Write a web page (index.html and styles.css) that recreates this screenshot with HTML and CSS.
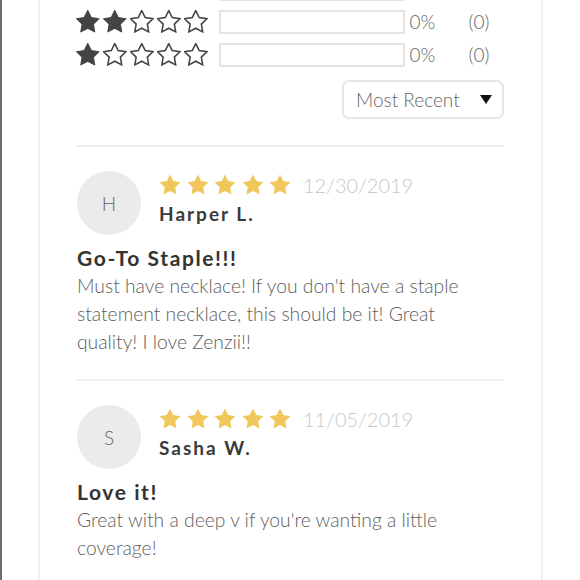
FILE: index.html
```html
<!DOCTYPE html>
<html>
<head>
<meta charset="utf-8">
<link rel="stylesheet" href="styles.css">
</head>
<body>
<svg width="0" height="0" class="defs">
  <defs>
    <polygon id="star" points="12,2 15.09,8.26 22,9.27 17,14.14 18.18,21.02 12,17.77 5.82,21.02 7,14.14 2,9.27 8.91,8.26"/>
  </defs>
</svg>
<div class="page">
  <div class="card">
    <div class="ratings">
      <div class="rating-row">
        <div class="stars dark">
          <svg viewBox="1.5 1.5 21 21"><use href="#star" class="full"/></svg>
          <svg viewBox="1.5 1.5 21 21"><use href="#star" class="full"/></svg>
          <svg viewBox="1.5 1.5 21 21"><use href="#star" class="full"/></svg>
          <svg viewBox="1.5 1.5 21 21"><use href="#star" class="empty"/></svg>
          <svg viewBox="1.5 1.5 21 21"><use href="#star" class="empty"/></svg>
        </div>
        <div class="bar"></div>
      </div>
      <div class="rating-row">
        <div class="stars dark">
          <svg viewBox="1.5 1.5 21 21"><use href="#star" class="full"/></svg>
          <svg viewBox="1.5 1.5 21 21"><use href="#star" class="full"/></svg>
          <svg viewBox="1.5 1.5 21 21"><use href="#star" class="empty"/></svg>
          <svg viewBox="1.5 1.5 21 21"><use href="#star" class="empty"/></svg>
          <svg viewBox="1.5 1.5 21 21"><use href="#star" class="empty"/></svg>
        </div>
        <div class="bar"></div>
        <span class="pct">0%</span>
        <span class="count">(0)</span>
      </div>
      <div class="rating-row">
        <div class="stars dark">
          <svg viewBox="1.5 1.5 21 21"><use href="#star" class="full"/></svg>
          <svg viewBox="1.5 1.5 21 21"><use href="#star" class="empty"/></svg>
          <svg viewBox="1.5 1.5 21 21"><use href="#star" class="empty"/></svg>
          <svg viewBox="1.5 1.5 21 21"><use href="#star" class="empty"/></svg>
          <svg viewBox="1.5 1.5 21 21"><use href="#star" class="empty"/></svg>
        </div>
        <div class="bar"></div>
        <span class="pct">0%</span>
        <span class="count">(0)</span>
      </div>
    </div>

    <div class="sort-wrap">
      <div class="sort">
        <span>Most Recent</span>
        <span class="caret"></span>
      </div>
    </div>

    <div class="review">
      <div class="review-head">
        <div class="avatar">H</div>
        <div class="meta">
          <div class="meta-top">
            <div class="stars gold">
              <svg viewBox="1.5 1.5 21 21"><use href="#star"/></svg>
              <svg viewBox="1.5 1.5 21 21"><use href="#star"/></svg>
              <svg viewBox="1.5 1.5 21 21"><use href="#star"/></svg>
              <svg viewBox="1.5 1.5 21 21"><use href="#star"/></svg>
              <svg viewBox="1.5 1.5 21 21"><use href="#star"/></svg>
            </div>
            <span class="date">12/30/2019</span>
          </div>
          <div class="name">Harper L.</div>
        </div>
      </div>
      <h3 class="title">Go-To Staple!!!</h3>
      <p class="body">Must have necklace! If you don't have a staple statement necklace, this should be it! Great quality! I love Zenzii!!</p>
    </div>

    <div class="review">
      <div class="review-head">
        <div class="avatar">S</div>
        <div class="meta">
          <div class="meta-top">
            <div class="stars gold">
              <svg viewBox="1.5 1.5 21 21"><use href="#star"/></svg>
              <svg viewBox="1.5 1.5 21 21"><use href="#star"/></svg>
              <svg viewBox="1.5 1.5 21 21"><use href="#star"/></svg>
              <svg viewBox="1.5 1.5 21 21"><use href="#star"/></svg>
              <svg viewBox="1.5 1.5 21 21"><use href="#star"/></svg>
            </div>
            <span class="date">11/05/2019</span>
          </div>
          <div class="name">Sasha W.</div>
        </div>
      </div>
      <h3 class="title">Love it!</h3>
      <p class="body">Great with a deep v if you're wanting a little coverage!</p>
    </div>
  </div>
</div>
</body>
</html>
```

FILE: styles.css
```css
* { box-sizing: border-box; }

html, body {
  margin: 0;
  padding: 0;
  background: #fff;
  height: 100%;
  overflow: hidden;
}

body {
  font-family: Lato, "Open Sans", "Liberation Sans", sans-serif;
  color: #666;
}

.defs {
  position: absolute;
  width: 0;
  height: 0;
}

.page {
  border-left: 2px solid #6e6e6e;
  height: 100%;
  padding-left: 36px;
  overflow: hidden;
}

.card {
  width: 505px;
  height: calc(100% + 28px);
  border-left: 2px solid #efefef;
  border-right: 2px solid #efefef;
  padding: 0 37px 0 37px;
  margin-top: -28px;
  overflow: hidden;
}

/* rating summary */
.rating-row {
  display: flex;
  align-items: center;
  height: 33px;
}

.stars {
  display: flex;
  gap: 5.5px;
}

.stars svg {
  width: 22px;
  height: 22px;
  display: block;
}

.stars.dark {
  gap: 3.5px;
  margin-left: -1px;
}

.stars.dark svg {
  width: 23.5px;
  height: 23.5px;
}

.stars.dark .full {
  fill: #444;
  stroke: #444;
  stroke-width: 1;
  stroke-linejoin: round;
}

.stars.dark .empty {
  fill: #fff;
  stroke: #444;
  stroke-width: 1.4;
  stroke-linejoin: miter;
}

.bar {
  width: 186px;
  height: 24px;
  margin-left: 11px;
  border: 2px solid #e4e4e4;
}

.pct {
  width: 64px;
  padding-left: 5px;
  font-size: 19px;
  font-weight: 300;
  color: #666;
}

.count {
  font-size: 19px;
  font-weight: 300;
  color: #666;
}

/* sort dropdown */
.sort-wrap {
  display: flex;
  justify-content: flex-end;
  margin-top: 9px;
  padding-bottom: 26px;
  border-bottom: 2px solid #efefef;
}

.sort {
  width: 162px;
  height: 39px;
  border: 2px solid #e6e6e6;
  border-radius: 7px;
  display: flex;
  align-items: center;
  justify-content: space-between;
  padding: 0 10px 0 12px;
  font-size: 19px;
  font-weight: 300;
  color: #666;
}

.caret {
  width: 0;
  height: 0;
  border-left: 6px solid transparent;
  border-right: 6px solid transparent;
  border-top: 9px solid #111;
}

/* reviews */
.review {
  padding: 24px 0 23px;
  border-bottom: 2px solid #efefef;
}

.review-head {
  display: flex;
  align-items: center;
}

.avatar {
  width: 64px;
  height: 64px;
  border-radius: 50%;
  background: #ebebeb;
  display: flex;
  align-items: center;
  justify-content: center;
  font-size: 19px;
  font-weight: 300;
  color: #666;
  flex-shrink: 0;
}

.meta {
  margin-left: 18px;
  margin-top: -7px;
}

.meta-top {
  display: flex;
  align-items: center;
  height: 24px;
}

.stars.gold {
  gap: 5.5px;
}

.stars.gold svg {
  width: 22px;
  height: 22px;
  fill: #f0c75b;
}

.date {
  margin-left: 12px;
  font-size: 20px;
  font-weight: 300;
  color: #c9c9c9;
}

.name {
  margin-top: 5px;
  font-size: 19px;
  font-weight: 700;
  letter-spacing: 2px;
  color: #3a3a3a;
  line-height: 24px;
}

.title {
  margin: 9px 0 0;
  font-size: 21px;
  font-weight: 700;
  letter-spacing: 1.6px;
  line-height: 28px;
  color: #333;
}

.body {
  margin: 0;
  font-size: 19.3px;
  font-weight: 300;
  line-height: 28px;
  color: #5e5e5e;
  max-width: 410px;
}
```
